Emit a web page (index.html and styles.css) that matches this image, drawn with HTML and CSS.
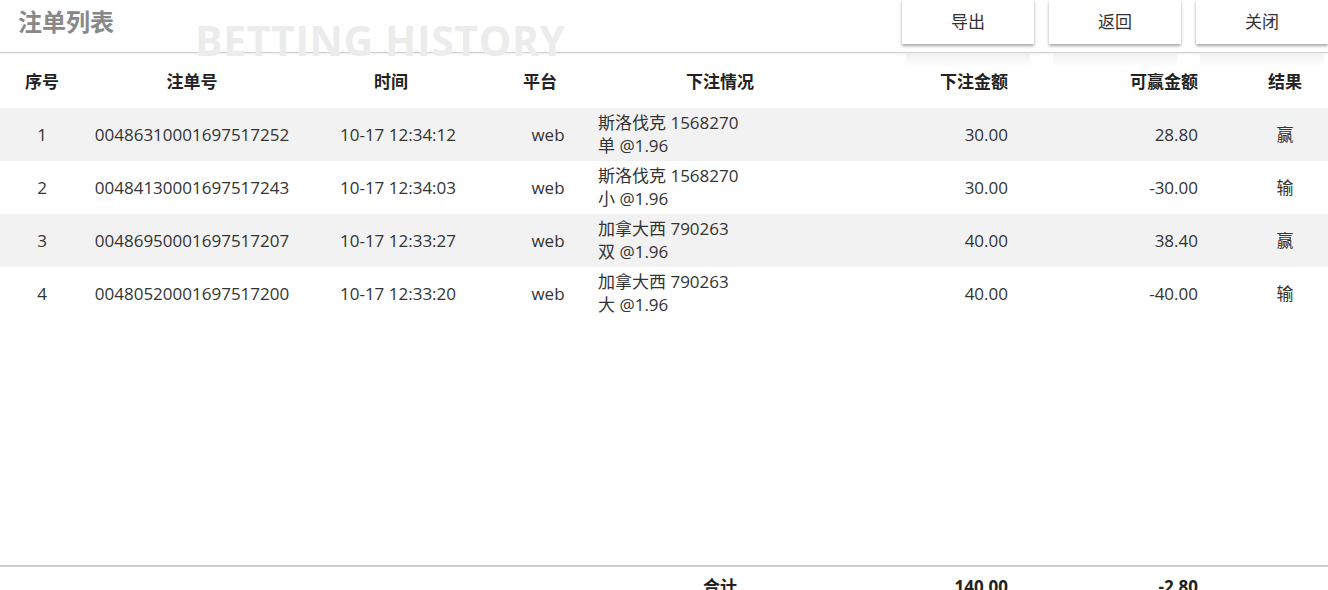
FILE: index.html
```html
<!DOCTYPE html>
<html lang="zh-CN">
<head>
    <meta charset="UTF-8">
    <title>注单列表</title>
    <link rel="stylesheet" href="styles.css">
</head>
<body>
    <div class="header">
        <h1 class="title">注单列表</h1>
        <div class="watermark">BETTING HISTORY</div>
        <div class="actions">
            <button class="btn">导出</button>
            <button class="btn">返回</button>
            <button class="btn">关闭</button>
        </div>
    </div>

    <div class="list">
        <div class="row head">
            <div class="c-center">序号</div>
            <div class="c-center">注单号</div>
            <div class="c-center">时间</div>
            <div class="c-center">平台</div>
            <div class="c-center">下注情况</div>
            <div class="c-right">下注金额</div>
            <div class="c-right c-win">可赢金额</div>
            <div class="c-center">结果</div>
        </div>

        <div class="row odd">
            <div class="c-center">1</div>
            <div class="c-center">00486310001697517252</div>
            <div class="c-center c-time">10-17 12:34:12</div>
            <div class="c-center c-plat">web</div>
            <div class="c-left">斯洛伐克 1568270<br>单 @1.96</div>
            <div class="c-right">30.00</div>
            <div class="c-right c-win">28.80</div>
            <div class="c-center">赢</div>
        </div>
        <div class="row">
            <div class="c-center">2</div>
            <div class="c-center">00484130001697517243</div>
            <div class="c-center c-time">10-17 12:34:03</div>
            <div class="c-center c-plat">web</div>
            <div class="c-left">斯洛伐克 1568270<br>小 @1.96</div>
            <div class="c-right">30.00</div>
            <div class="c-right c-win">-30.00</div>
            <div class="c-center">输</div>
        </div>
        <div class="row odd">
            <div class="c-center">3</div>
            <div class="c-center">00486950001697517207</div>
            <div class="c-center c-time">10-17 12:33:27</div>
            <div class="c-center c-plat">web</div>
            <div class="c-left">加拿大西 790263<br>双 @1.96</div>
            <div class="c-right">40.00</div>
            <div class="c-right c-win">38.40</div>
            <div class="c-center">赢</div>
        </div>
        <div class="row">
            <div class="c-center">4</div>
            <div class="c-center">00480520001697517200</div>
            <div class="c-center c-time">10-17 12:33:20</div>
            <div class="c-center c-plat">web</div>
            <div class="c-left">加拿大西 790263<br>大 @1.96</div>
            <div class="c-right">40.00</div>
            <div class="c-right c-win">-40.00</div>
            <div class="c-center">输</div>
        </div>
    </div>

    <div class="row total">
        <div></div>
        <div></div>
        <div></div>
        <div></div>
        <div class="c-center">合计</div>
        <div class="c-right">140.00</div>
        <div class="c-right c-win">-2.80</div>
        <div></div>
    </div>
</body>
</html>
```

FILE: styles.css
```css
body {
    margin: 0;
    font-family: "Open Sans", "Noto Sans CJK SC", sans-serif;
    font-size: 17px;
    color: #333;
    background: #fff;
}
.header {
    position: relative;
    height: 52px;
    display: flex;
    align-items: flex-start;
    justify-content: space-between;
    border-bottom: 1px solid #d0d0d0;
    box-shadow: 0 1px 2px rgba(0,0,0,0.08);
}
.title {
    margin: 0;
    padding: 4px 0 0 18px;
    font-family: "Noto Sans CJK SC", sans-serif;
    font-size: 24px;
    line-height: 34px;
    font-weight: bold;
    color: #888;
    position: relative;
    z-index: 1;
}
.watermark {
    position: absolute;
    left: 195px;
    top: 16px;
    font-family: "Open Sans", "Noto Sans", sans-serif;
    font-size: 41px;
    line-height: 48px;
    font-weight: bold;
    color: #ececec;
    letter-spacing: 0.6px;
}
.actions {
    display: flex;
    gap: 15px;
    position: relative;
    z-index: 1;
}
.btn {
    position: relative;
    width: 132px;
    height: 44px;
    border: none;
    background: #fff;
    font-family: "Noto Sans CJK SC", sans-serif;
    font-size: 17px;
    line-height: 20px;
    color: #333;
    box-shadow: 0 2px 3px rgba(0,0,0,0.35);
    padding: 0 0 2px;
}
.btn::after {
    content: "";
    position: absolute;
    left: 4px;
    right: 4px;
    top: 53px;
    height: 14px;
    background: linear-gradient(#f0f0f0, rgba(255,255,255,0));
}
.list {
    height: 513px;
}
.row {
    display: grid;
    grid-template-columns: 84px 216px 182px 116px 244px 176px 224px 86px;
    align-items: center;
    height: 53px;
    line-height: 23px;
}
.row > div {
    padding-bottom: 1px;
}
.row.head {
    height: 55px;
    padding-top: 3px;
    box-sizing: border-box;
    font-weight: bold;
    color: #222;
}
.odd {
    background: #f2f2f2;
}
.c-center {
    text-align: center;
}
.c-left {
    text-align: left;
}
.c-right {
    text-align: right;
    padding-right: 10px;
}
.row .c-win {
    padding-right: 44px;
}
.c-time {
    padding-left: 14px;
}
.c-plat {
    padding-left: 16px;
}
.total {
    border-top: 2px solid #ccc;
    margin-top: -1px;
    font-weight: bold;
    color: #222;
    height: 50px;
    align-items: start;
    padding-top: 8px;
}
```
